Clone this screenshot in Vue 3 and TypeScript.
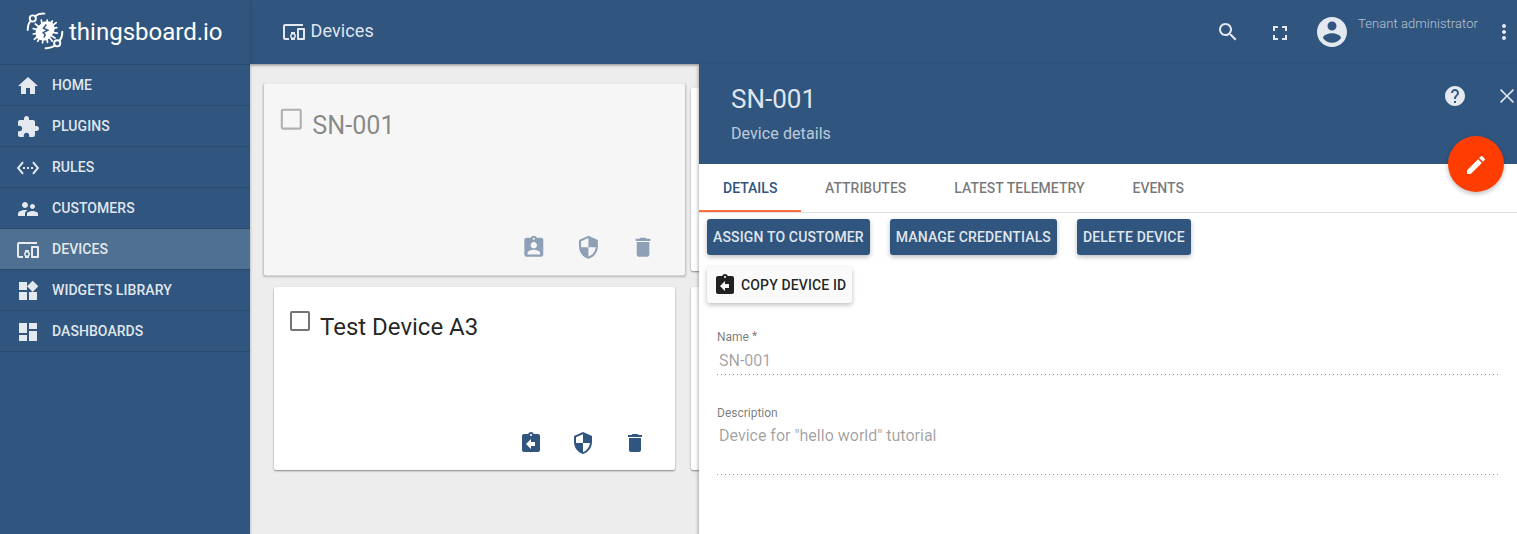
<script setup lang="ts">
interface NavItem {
  label: string
  icon: string
}

interface Device {
  name: string
  open: boolean
  actions: string[]
}

const icons: Record<string, string> = {
  home: 'M10 20v-6h4v6h5v-8h3L12 3 2 12h3v8z',
  plugins: 'M20.5 11H19V7c0-1.1-.9-2-2-2h-4V3.5C13 2.12 11.88 1 10.5 1S8 2.12 8 3.5V5H4c-1.1 0-1.99.9-1.99 2v3.8H3.5c1.49 0 2.7 1.21 2.7 2.7s-1.21 2.7-2.7 2.7H2V20c0 1.1.9 2 2 2h3.8v-1.5c0-1.49 1.21-2.7 2.7-2.7 1.49 0 2.7 1.21 2.7 2.7V22H17c1.1 0 2-.9 2-2v-4h1.5c1.38 0 2.5-1.12 2.5-2.5S21.88 11 20.5 11z',
  rules: 'M7.77 6.76L6.23 5.48.82 12l5.41 6.52 1.54-1.28L3.42 12l4.35-5.24zM7 13h2v-2H7v2zm10-2h-2v2h2v-2zm-6 2h2v-2h-2v2zm6.77-7.52l-1.54 1.28L20.58 12l-4.35 5.24 1.54 1.28L23.18 12l-5.41-6.52z',
  customers: 'M16.5 12c1.38 0 2.49-1.12 2.49-2.5S17.88 7 16.5 7C15.12 7 14 8.12 14 9.5s1.12 2.5 2.5 2.5zM9 11c1.66 0 2.99-1.34 2.99-3S10.66 5 9 5C7.34 5 6 6.34 6 8s1.34 3 3 3zm7.5 3c-1.83 0-5.5.92-5.5 2.75V19h11v-2.25c0-1.83-3.67-2.75-5.5-2.75zM9 13c-2.33 0-7 1.17-7 3.5V19h7v-2.25c0-.85.33-2.34 2.37-3.47C10.5 13.1 9.66 13 9 13z',
  devices: 'M3 6h18V4H3c-1.1 0-2 .9-2 2v12c0 1.1.9 2 2 2h4v-2H3V6zm10 6H9v1.78c-.61.55-1 1.33-1 2.22s.39 1.67 1 2.22V20h4v-1.78c.61-.55 1-1.34 1-2.22s-.39-1.67-1-2.22V12zm-2 5.5c-.83 0-1.5-.67-1.5-1.5s.67-1.5 1.5-1.5 1.5.67 1.5 1.5-.67 1.5-1.5 1.5zM22 8h-6c-.5 0-1 .5-1 1v10c0 .5.5 1 1 1h6c.5 0 1-.5 1-1V9c0-.5-.5-1-1-1zm-1 10h-4v-8h4v8z',
  widgets: 'M13 13v8h8v-8h-8zM3 21h8v-8H3v8zM3 3v8h8V3H3zm13.66-1.31L11 7.34 16.66 13l5.66-5.66-5.66-5.65z',
  dashboards: 'M3 13h8V3H3v10zm0 8h8v-6H3v6zm10 0h8V11h-8v10zm0-18v6h8V3h-8z',
  search: 'M15.5 14h-.79l-.28-.27C15.41 12.59 16 11.11 16 9.5 16 5.91 13.09 3 9.5 3S3 5.91 3 9.5 5.91 16 9.5 16c1.61 0 3.09-.59 4.23-1.57l.27.28v.79l5 4.99L20.49 19l-4.99-5zm-6 0C7.01 14 5 11.99 5 9.5S7.01 5 9.5 5 14 7.01 14 9.5 11.99 14 9.5 14z',
  fullscreen: 'M7 14H5v5h5v-2H7v-3zm-2-4h2V7h3V5H5v5zm12 7h-3v2h5v-5h-2v3zM14 5v2h3v3h2V5h-5z',
  account: 'M12 2C6.48 2 2 6.48 2 12s4.48 10 10 10 10-4.48 10-10S17.52 2 12 2zm0 3c1.66 0 3 1.34 3 3s-1.34 3-3 3-3-1.34-3-3 1.34-3 3-3zm0 14.2c-2.5 0-4.71-1.28-6-3.22.03-1.99 4-3.08 6-3.08 1.99 0 5.97 1.09 6 3.08-1.29 1.94-3.5 3.22-6 3.22z',
  more: 'M12 8c1.1 0 2-.9 2-2s-.9-2-2-2-2 .9-2 2 .9 2 2 2zm0 2c-1.1 0-2 .9-2 2s.9 2 2 2 2-.9 2-2-.9-2-2-2zm0 6c-1.1 0-2 .9-2 2s.9 2 2 2 2-.9 2-2-.9-2-2-2z',
  help: 'M12 2C6.48 2 2 6.48 2 12s4.48 10 10 10 10-4.48 10-10S17.52 2 12 2zm1 17h-2v-2h2v2zm2.07-7.75l-.9.92C13.45 12.9 13 13.5 13 15h-2v-.5c0-1.1.45-2.1 1.17-2.83l1.24-1.26c.37-.36.59-.86.59-1.41 0-1.1-.9-2-2-2s-2 .9-2 2H8c0-2.21 1.79-4 4-4s4 1.79 4 4c0 .88-.36 1.68-.93 2.25z',
  close: 'M18.98 6.13L17.87 5.02 12 10.89 6.13 5.02 5.02 6.13 10.89 12l-5.87 5.87 1.11 1.11L12 13.11l5.87 5.87 1.11-1.11L13.11 12z',
  edit: 'M3 17.25V21h3.75L17.81 9.94l-3.75-3.75L3 17.25zM20.71 7.04c.39-.39.39-1.02 0-1.41l-2.34-2.34c-.39-.39-1.02-.39-1.41 0l-1.83 1.83 3.75 3.75 1.83-1.83z',
  assign: 'M19 3h-4.18C14.4 1.84 13.3 1 12 1c-1.3 0-2.4.84-2.82 2H5c-1.1 0-2 .9-2 2v14c0 1.1.9 2 2 2h14c1.1 0 2-.9 2-2V5c0-1.1-.9-2-2-2zm-7 0c.55 0 1 .45 1 1s-.45 1-1 1-1-.45-1-1 .45-1 1-1zm0 4c1.66 0 3 1.34 3 3s-1.34 3-3 3-3-1.34-3-3 1.34-3 3-3zm6 12H6v-1.4c0-2 4-3.1 6-3.1s6 1.1 6 3.1V19z',
  unassign: 'M19 3h-4.18C14.4 1.84 13.3 1 12 1c-1.3 0-2.4.84-2.82 2H5c-1.1 0-2 .9-2 2v14c0 1.1.9 2 2 2h14c1.1 0 2-.9 2-2V5c0-1.1-.9-2-2-2zm-7 0c.55 0 1 .45 1 1s-.45 1-1 1-1-.45-1-1 .45-1 1-1zm4 12h-4v3l-5-5 5-5v3h4v4z',
  security: 'M12 1L3 5v6c0 5.55 3.84 10.74 9 12 5.16-1.26 9-6.45 9-12V5l-9-4zm0 10.99h7c-.53 4.12-3.28 7.79-7 8.94V12H5V6.3l7-3.11v8.8z',
  remove: 'M6 19c0 1.1.9 2 2 2h8c1.1 0 2-.9 2-2V7H6v12zM19 4h-3.5l-1-1h-5l-1 1H5v2h14V4z',
}

const nav: NavItem[] = [
  { label: 'HOME', icon: 'home' },
  { label: 'PLUGINS', icon: 'plugins' },
  { label: 'RULES', icon: 'rules' },
  { label: 'CUSTOMERS', icon: 'customers' },
  { label: 'DEVICES', icon: 'devices' },
  { label: 'WIDGETS LIBRARY', icon: 'widgets' },
  { label: 'DASHBOARDS', icon: 'dashboards' },
]
const activeNav = 'DEVICES'

const devices: Device[] = [
  { name: 'SN-001', open: true, actions: ['assign', 'security', 'remove'] },
  { name: '', open: false, actions: [] },
  { name: 'Test Device A3', open: false, actions: ['unassign', 'security', 'remove'] },
  { name: '', open: false, actions: [] },
]

const tabs: string[] = ['DETAILS', 'ATTRIBUTES', 'LATEST TELEMETRY', 'EVENTS']
const activeTab = 'DETAILS'
const actions: string[] = ['ASSIGN TO CUSTOMER', 'MANAGE CREDENTIALS', 'DELETE DEVICE']
</script>

<template>
  <div class="app">
    <aside class="sidebar">
      <div class="brand">
        <svg class="brand-mark" viewBox="0 0 38 38">
          <g fill="none" stroke="#fff" stroke-width="1.9" stroke-linecap="round">
            <circle cx="6.8" cy="6.5" r="3.1" />
            <path d="M9 4.2C11.5 2.2 15 1.4 18.4 1.6M4.4 9C2.3 11.700 1.600 15 1.700 18" />
            <circle cx="31.200" cy="31.300" r="3.100" />
            <path d="M29 33.600C26.500 35.600 23 36.400 19.600 36.200M33.600 28.800C35.700 26.100 36.400 22.800 36.300 19.800" />
          </g>
          <path
            d="M15.300 8.200L16 12M21.200 8V12M26.300 9L24 13M30.200 10.600L26 14M30.800 15.700L27 16.500M31.200 21.200L27 20.500M29 26L25 23.500M26.300 29.200L23.500 25.500M21.500 30.300L21 26M16.600 30.800L17 26M11.700 29.300L14 25M8.300 27.300L12 24M7.300 22L11 21.300M7.200 16.600L11 17.500M9.400 12L13 15"
            stroke="#fff" stroke-width="1.700" stroke-linecap="round"
          />
          <path d="M18.500 9.500H23.500Q26.300 9.800 27.600 12.300Q28.900 15 28.400 18.500Q28.100 20.500 26.800 22L22.500 27Q21 28.600 18.800 28.500L14 28Q11.300 27.400 10.200 24.800Q9.300 22 9.700 18.500Q10 16.800 11.200 15.500L15.500 11Q16.900 9.600 18.500 9.500Z" fill="#fff" />
          <path d="M20.300 12.500L17.500 16.300L21.800 18.200L17.200 20.600L19.200 22.800L17.900 25.500" fill="none" stroke="#305680" stroke-width="1.500" />
        </svg>
        <span class="brand-name">thingsboard.io</span>
      </div>
      <nav>
        <a v-for="item in nav" :key="item.label" class="nav-item" :class="{ active: item.label === activeNav }">
          <svg class="icon" viewBox="0 0 24 24"><path :d="icons[item.icon]" /></svg>
          <span>{{ item.label }}</span>
        </a>
      </nav>
    </aside>

    <div class="workspace">
      <header class="topbar">
        <div class="page-title">
          <svg class="icon" viewBox="0 0 24 24"><path :d="icons.devices" /></svg>
          <span>Devices</span>
        </div>
        <div class="tools">
          <svg class="icon search" viewBox="0 0 24 24"><path :d="icons.search" /></svg>
          <svg class="icon fullscreen" viewBox="0 0 24 24"><path :d="icons.fullscreen" /></svg>
          <svg class="icon avatar" viewBox="0 0 24 24"><path :d="icons.account" /></svg>
          <span class="role">Tenant administrator</span>
          <svg class="icon more" viewBox="0 0 24 24"><path :d="icons.more" /></svg>
        </div>
      </header>

      <main class="content">
        <section class="cards">
          <article v-for="(device, i) in devices" :key="i" class="card" :class="{ open: device.open }">
            <template v-if="device.name">
              <div class="card-head">
                <span class="checkbox"></span>
                <h2>{{ device.name }}</h2>
              </div>
              <div class="card-actions">
                <svg v-for="a in device.actions" :key="a" class="icon" viewBox="0 0 24 24"><path :d="icons[a]" /></svg>
              </div>
            </template>
          </article>
        </section>

        <section class="details">
          <div class="details-head">
            <div>
              <h1>SN-001</h1>
              <p>Device details</p>
            </div>
            <div class="head-icons">
              <svg class="icon" viewBox="0 0 24 24"><path :d="icons.help" /></svg>
              <svg class="icon" viewBox="0 0 24 24"><path :d="icons.close" /></svg>
            </div>
            <button class="fab">
              <svg class="icon" viewBox="0 0 24 24"><path :d="icons.edit" /></svg>
            </button>
          </div>
          <div class="tabs">
            <div v-for="tab in tabs" :key="tab" class="tab" :class="{ active: tab === activeTab }">{{ tab }}</div>
          </div>
          <div class="buttons">
            <button v-for="a in actions" :key="a" class="btn">{{ a }}</button>
          </div>
          <div class="buttons second">
            <button class="btn light">
              <svg class="icon" viewBox="0 0 24 24"><path :d="icons.unassign" /></svg>
              <span>COPY DEVICE ID</span>
            </button>
          </div>
          <div class="form">
            <div class="field">
              <label>Name<span class="req">*</span></label>
              <div class="value single">SN-001</div>
            </div>
            <div class="field tall">
              <label>Description</label>
              <div class="value">Device for "hello world" tutorial</div>
            </div>
          </div>
        </section>
      </main>
    </div>
  </div>
</template>

<style>
body {
  margin: 0;
  overflow: hidden;
}
</style>

<style scoped>
.app {
  display: flex;
  width: 1517px;
  height: 534px;
  overflow: hidden;
  font-family: Roboto, 'Liberation Sans', sans-serif;
  font-size: 14px;
  background: #ededed;
}

.icon {
  display: block;
  flex: none;
  width: 24px;
  height: 24px;
  fill: currentColor;
}

.sidebar {
  position: relative;
  z-index: 3;
  flex: none;
  width: 250px;
  background: #305680;
  color: rgba(255, 255, 255, 0.87);
  box-shadow: 0 1px 3px rgba(0, 0, 0, 0.3);
}

.brand {
  display: flex;
  align-items: center;
  box-sizing: border-box;
  height: 65px;
  padding: 0 0 2px 26px;
  border-bottom: 1px solid #294a6e;
  color: #fff;
}

.brand-mark {
  width: 38px;
  height: 38px;
}

.brand-name {
  margin: 1px 0 0 5px;
  font-size: 24px;
  white-space: nowrap;
}

.nav-item {
  display: flex;
  align-items: center;
  height: 40px;
  padding-left: 16px;
  border-bottom: 1px solid #294a6e;
  font-weight: 500;
  letter-spacing: 0.06px;
  white-space: nowrap;
}

.nav-item.active {
  background: #507092;
}

.nav-item .icon {
  margin: 2px 12px 0 0;
}

.workspace {
  display: flex;
  flex: 1;
  flex-direction: column;
  min-width: 0;
}

.topbar {
  display: flex;
  flex: none;
  justify-content: space-between;
  height: 64px;
  background: #305680;
  color: rgba(255, 255, 255, 0.87);
  box-shadow: 0 1px 3px rgba(0, 0, 0, 0.45);
}

.page-title {
  display: flex;
  align-items: center;
  padding-left: 32px;
  font-size: 18px;
  letter-spacing: 0.1px;
}

.page-title span {
  margin: -3px 0 0 4.5px;
}

.tools {
  display: flex;
  align-items: center;
}

.search {
  margin-right: 28px;
}

.fullscreen {
  margin: 2px 22px 0 0;
}

.avatar {
  width: 36px;
  height: 36px;
  margin-right: 8px;
}

.role {
  width: 120px;
  margin: -18px 14px 0 0;
  font-size: 13px;
  font-weight: 300;
  letter-spacing: 0.06px;
  white-space: nowrap;
  opacity: 0.75;
}

.more {
  margin-right: 1px;
}

.content {
  display: flex;
  flex: 1;
  min-height: 0;
}

.cards {
  display: grid;
  flex: none;
  grid-template-columns: 401px 401px;
  grid-template-rows: 183px 183px;
  gap: 16px;
  width: 425px;
  padding: 24px 0 0 24px;
}

.card {
  display: flex;
  flex-direction: column;
  justify-content: space-between;
  border-radius: 2px;
  background: #fff;
  box-shadow: 0 1px 2px rgba(0, 0, 0, 0.45);
  color: rgba(0, 0, 0, 0.87);
}

.card.open {
  opacity: 0.5;
  transform: scale(1.05);
}

.card-head {
  display: flex;
  align-items: flex-start;
  padding: 24px 16px 0;
}

.checkbox {
  box-sizing: border-box;
  width: 20px;
  height: 20px;
  border: 2px solid rgba(0, 0, 0, 0.54);
  border-radius: 2px;
}

.card h2 {
  margin: 0 0 0 10px;
  font-size: 24px;
  font-weight: 400;
  line-height: 32px;
}

.card-actions {
  display: flex;
  justify-content: flex-end;
  gap: 28px;
  padding: 0 28px 15px 0;
  color: #305680;
}

.details {
  z-index: 2;
  flex: 1;
  min-width: 0;
  background: #fff;
  box-shadow: 0 2px 4px rgba(0, 0, 0, 0.45);
}

.details-head {
  position: relative;
  display: flex;
  justify-content: space-between;
  height: 100px;
  padding-left: 32px;
  background: #305680;
  color: rgba(255, 255, 255, 0.87);
}

.topbar {
  position: relative;
  z-index: 1;
}

.content {
  position: relative;
}

.details {
  position: relative;
}

.details-head h1 {
  margin: 19px 0 0;
  font-size: 26px;
  font-weight: 400;
  line-height: 32px;
}

.details-head p {
  margin: 9px 0 0;
  font-size: 16px;
  letter-spacing: 0.08px;
  line-height: 20px;
  opacity: 0.8;
}

.head-icons {
  display: flex;
  gap: 28px;
  margin: 20px -2px 0 0;
}

.fab {
  position: absolute;
  right: 13px;
  bottom: -28px;
  display: flex;
  align-items: center;
  justify-content: center;
  width: 56px;
  height: 56px;
  padding: 2px 0 0;
  border: 0;
  border-radius: 50%;
  background: #ff3d00;
  color: #fff;
  box-shadow: 0 2px 5px rgba(0, 0, 0, 0.26);
}

.tabs {
  display: flex;
  height: 48px;
  border-bottom: 1px solid #e0e0e0;
}

.tab {
  box-sizing: border-box;
  height: 48px;
  padding: 0 24px;
  color: rgba(0, 0, 0, 0.54);
  font-weight: 500;
  line-height: 48px;
}

.tab.active {
  width: 102px;
  border-bottom: 2px solid #ff6e40;
  color: #305680;
}

.buttons {
  display: flex;
  gap: 20px;
  padding: 6px 8px 0;
}

.buttons.second {
  padding-top: 12px;
}

.btn {
  display: flex;
  align-items: center;
  height: 36px;
  padding: 0 6px;
  border: 0;
  border-radius: 3px;
  background: #305680;
  box-shadow: 0 2px 5px rgba(0, 0, 0, 0.26);
  color: rgba(255, 255, 255, 0.87);
  font: 500 14px Roboto, 'Liberation Sans', sans-serif;
  letter-spacing: 0.155px;
  white-space: nowrap;
}

.btn.light {
  background: #fafafa;
  color: rgba(0, 0, 0, 0.87);
  letter-spacing: 0.14px;
}

.btn.light .icon {
  margin-right: 4px;
}

.form {
  padding: 26px 18px 0;
}

.field {
  box-sizing: border-box;
  height: 46px;
  margin-bottom: 30px;
  background: linear-gradient(to right, rgba(0, 0, 0, 0.38) 0 1.32px, transparent 1.32px) 0 100% / 4px 1px repeat-x;
}

.field.tall {
  height: 70px;
}

.field label {
  display: block;
  color: rgba(0, 0, 0, 0.54);
  font-size: 12px;
  line-height: 16px;
}

.req {
  margin-left: 3px;
  font-size: 12px;
  vertical-align: 1px;
  line-height: 1;
}

.value {
  padding: 5px 2px 0;
  color: rgba(0, 0, 0, 0.38);
  font-size: 16px;
  line-height: 20px;
}

.value.single {
  padding-top: 6px;
}
</style>
